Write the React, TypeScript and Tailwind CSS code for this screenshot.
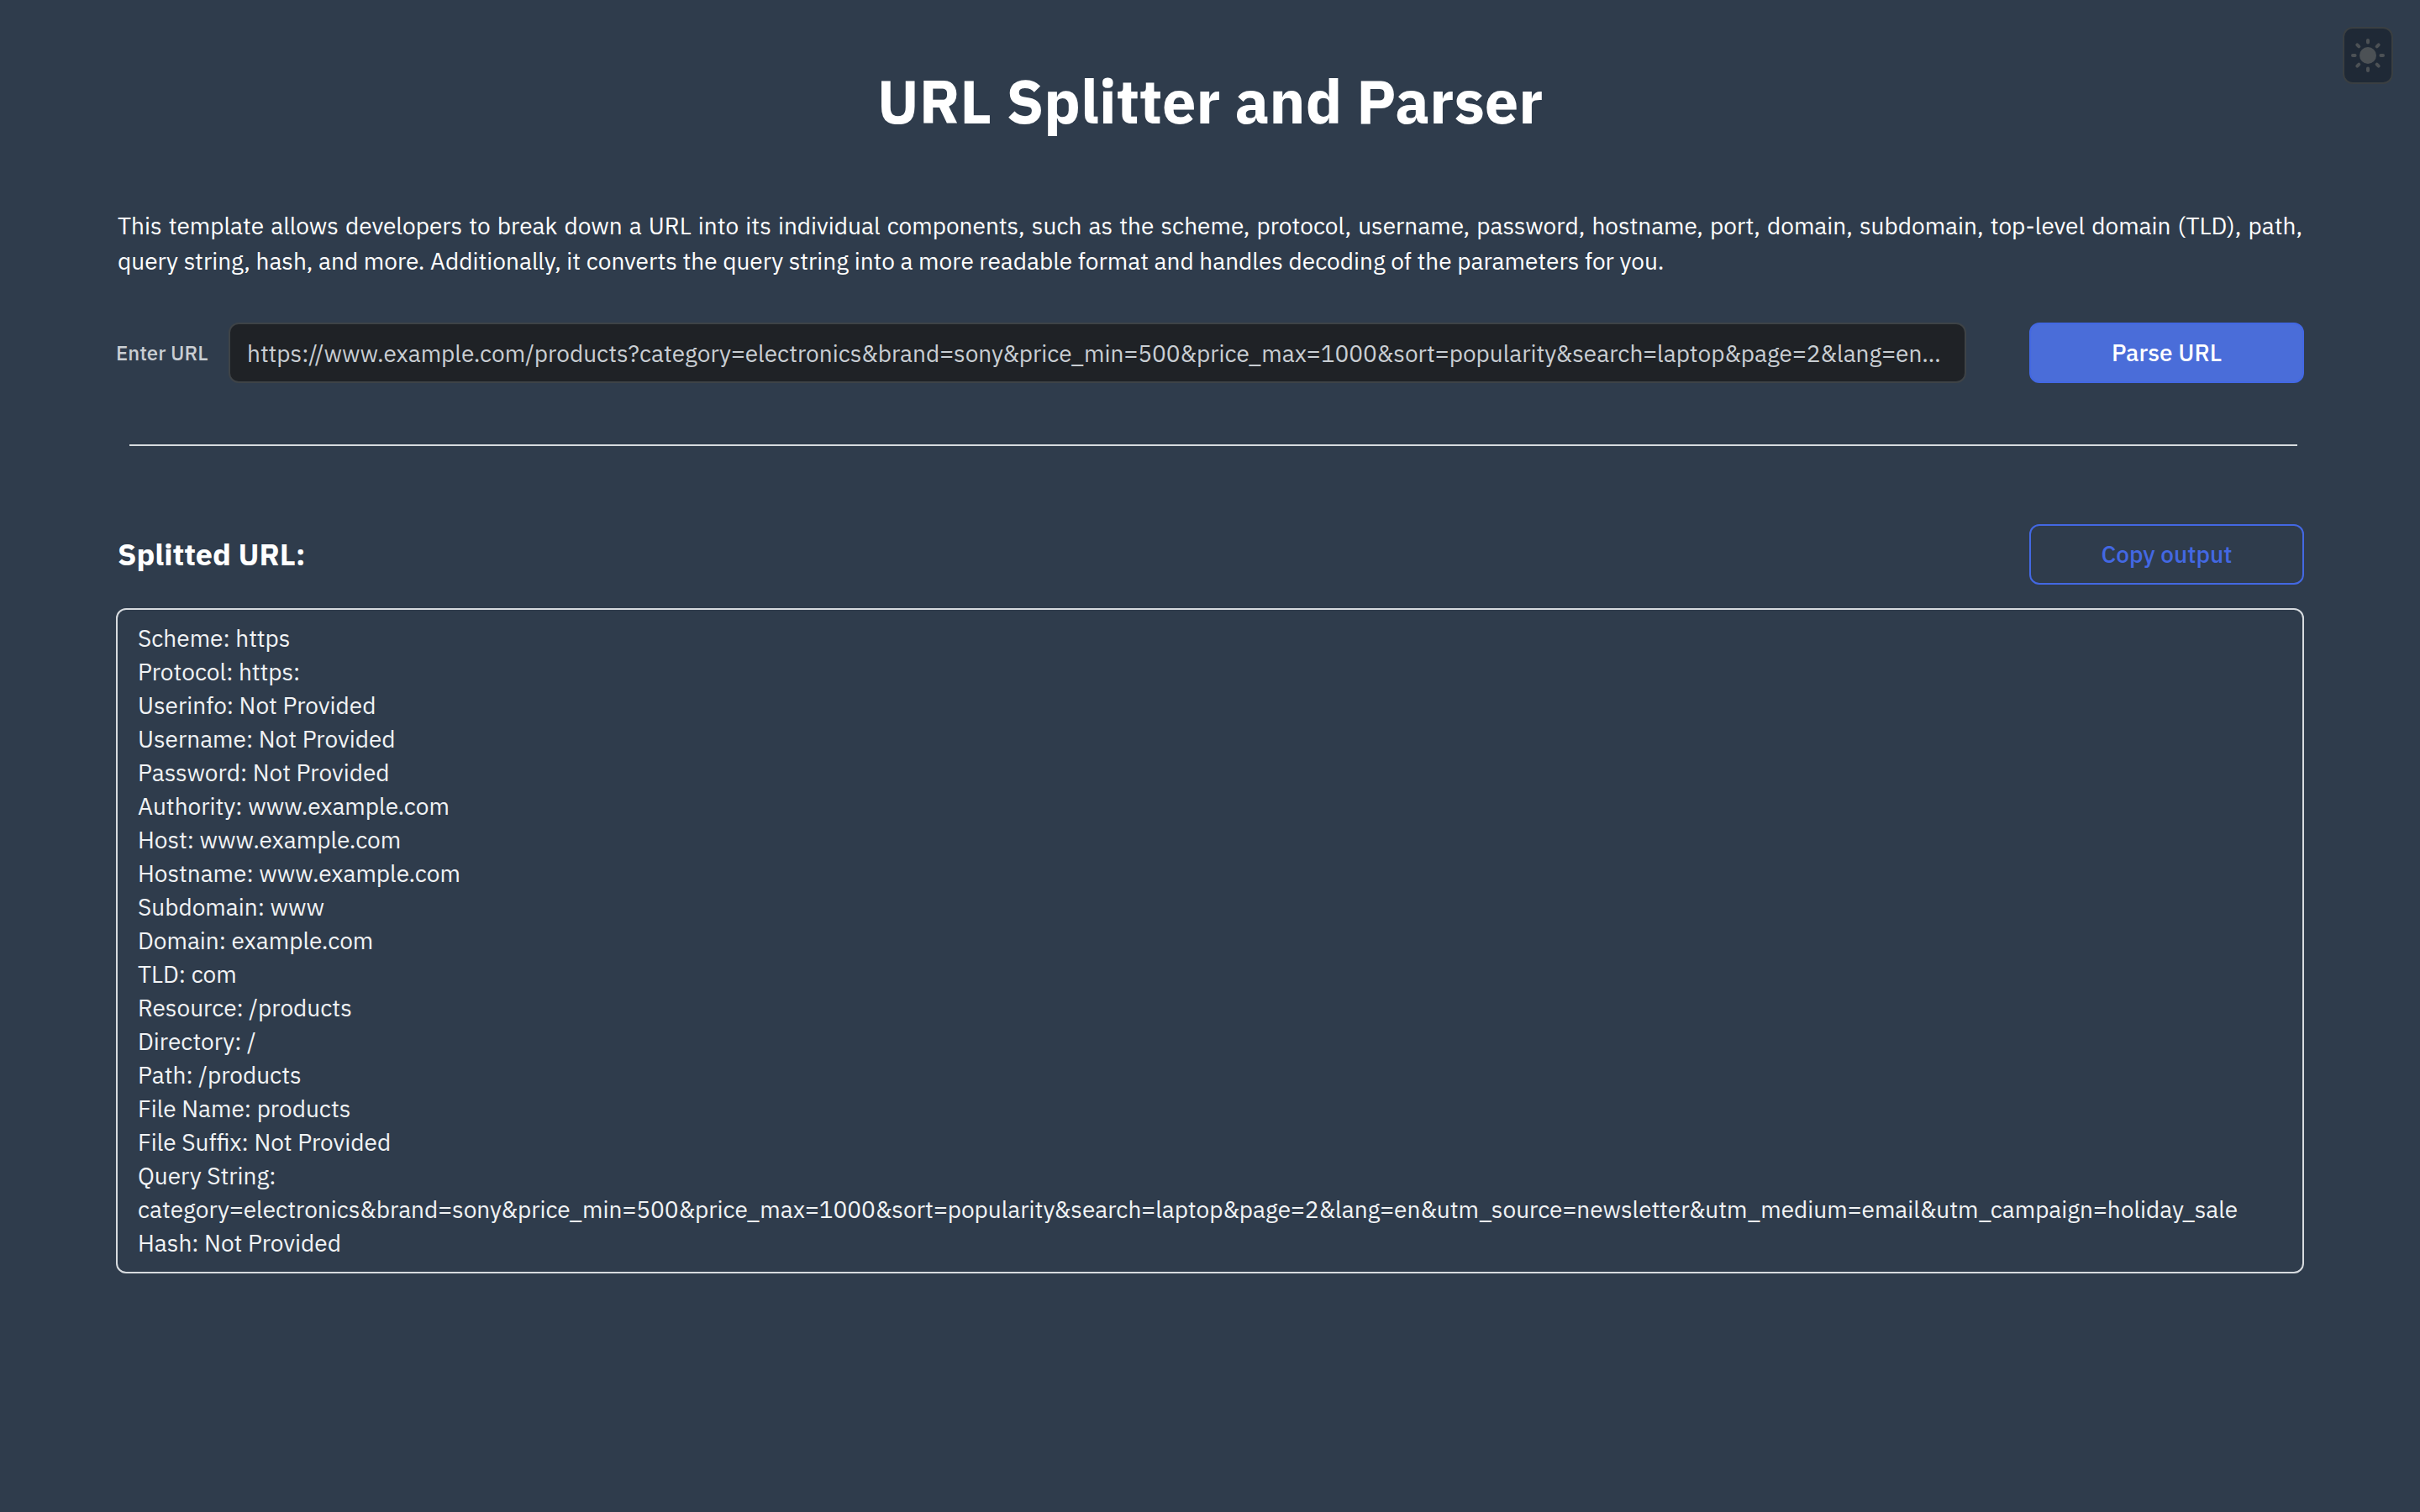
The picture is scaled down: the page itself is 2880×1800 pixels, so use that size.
import { useState } from 'react';

const SAMPLE_URL =
  'https://www.example.com/products?category=electronics&brand=sony&price_min=500&price_max=1000&sort=popularity&search=laptop&page=2&lang=en&utm_source=newsletter&utm_medium=email&utm_campaign=holiday_sale';

const RESULTS: [string, string][] = [
  ['Scheme', 'https'],
  ['Protocol', 'https:'],
  ['Userinfo', 'Not Provided'],
  ['Username', 'Not Provided'],
  ['Password', 'Not Provided'],
  ['Authority', 'www.example.com'],
  ['Host', 'www.example.com'],
  ['Hostname', 'www.example.com'],
  ['Subdomain', 'www'],
  ['Domain', 'example.com'],
  ['TLD', 'com'],
  ['Resource', '/products'],
  ['Directory', '/'],
  ['Path', '/products'],
  ['File Name', 'products'],
  ['File Suffix', 'Not Provided'],
  ['Query String', SAMPLE_URL.split('?')[1]],
  ['Hash', 'Not Provided'],
];

function SunIcon() {
  return (
    <svg viewBox="0 0 40 40" className="size-10" aria-hidden="true">
      <circle cx="20" cy="20" r="10" fill="currentColor" />
      <path
        d="M20 2v2.6M20 35.4V38M2 20h2.6M35.4 20H38M7.3 7.3l2 2M30.7 30.7l2 2M7.3 32.7l2-2M30.7 9.3l2-2"
        fill="none"
        stroke="currentColor"
        strokeWidth="4"
        strokeLinecap="round"
      />
    </svg>
  );
}

export default function App() {
  const [url, setUrl] = useState(SAMPLE_URL);

  return (
    <div className="relative min-h-screen bg-[#2f3c4c] px-[138px] pt-[72px] pb-16 font-['IBM_Plex_Sans',Roboto,sans-serif] text-[28px] text-white">
      <button
        type="button"
        aria-label="Switch to light theme"
        className="absolute top-8 right-8 flex h-[68px] w-[60px] items-center justify-center rounded-xl border-2 border-[#3a3f42] bg-[#1f2936] text-[#4c5155]"
      >
        <SunIcon />
      </button>

      <h1 className="text-center text-[72px] leading-[96px] font-bold">URL Splitter and Parser</h1>

      <p className="mt-20 px-0.5 text-justify leading-[42px]">
        This template allows developers to break down a URL into its individual components, such as the scheme,
        protocol, username, password, hostname, port, domain, subdomain, top-level domain (TLD), path, query string,
        hash, and more. Additionally, it converts the query string into a more readable format and handles decoding of
        the parameters for you.
      </p>

      <form className="mt-[52px] flex items-center" onSubmit={(e) => e.preventDefault()}>
        <label htmlFor="url" className="w-[134px] text-[24px] leading-8 font-medium text-[#c9ced3]">
          Enter URL
        </label>
        <input
          id="url"
          type="text"
          value={url}
          onChange={(e) => setUrl(e.target.value)}
          className="h-[72px] min-w-0 flex-1 rounded-xl border-2 border-[#3e4347] bg-[#1f2226] px-5 text-[28px] text-ellipsis text-[#c9ced3]"
        />
        <button
          type="submit"
          className="ml-[75px] h-[72px] w-[327px] rounded-xl border-2 border-[#4368e3] bg-[#4a6dd9] font-medium"
        >
          Parse URL
        </button>
      </form>

      <hr className="mt-[73px] mr-2 ml-4 border-t-2 border-[#d7dbdf]" />

      <section>
        <div className="mt-[93px] flex items-center justify-between">
          <h2 className="pl-0.5 text-[36px] leading-[48px] font-bold">Splitted URL:</h2>
          <button type="button" className="h-[72px] w-[327px] rounded-xl border-2 border-[#4368e3] font-medium text-[#4368e3]">
            Copy output
          </button>
        </div>
        <div className="mt-7 rounded-xl border-2 border-[#d7dbdf] px-6 py-3.5 text-[28px] leading-10 text-[#f1f3f5]">
          {RESULTS.map(([name, value]) => (
            <p key={name}>
              {name}: {value}
            </p>
          ))}
        </div>
      </section>
    </div>
  );
}
